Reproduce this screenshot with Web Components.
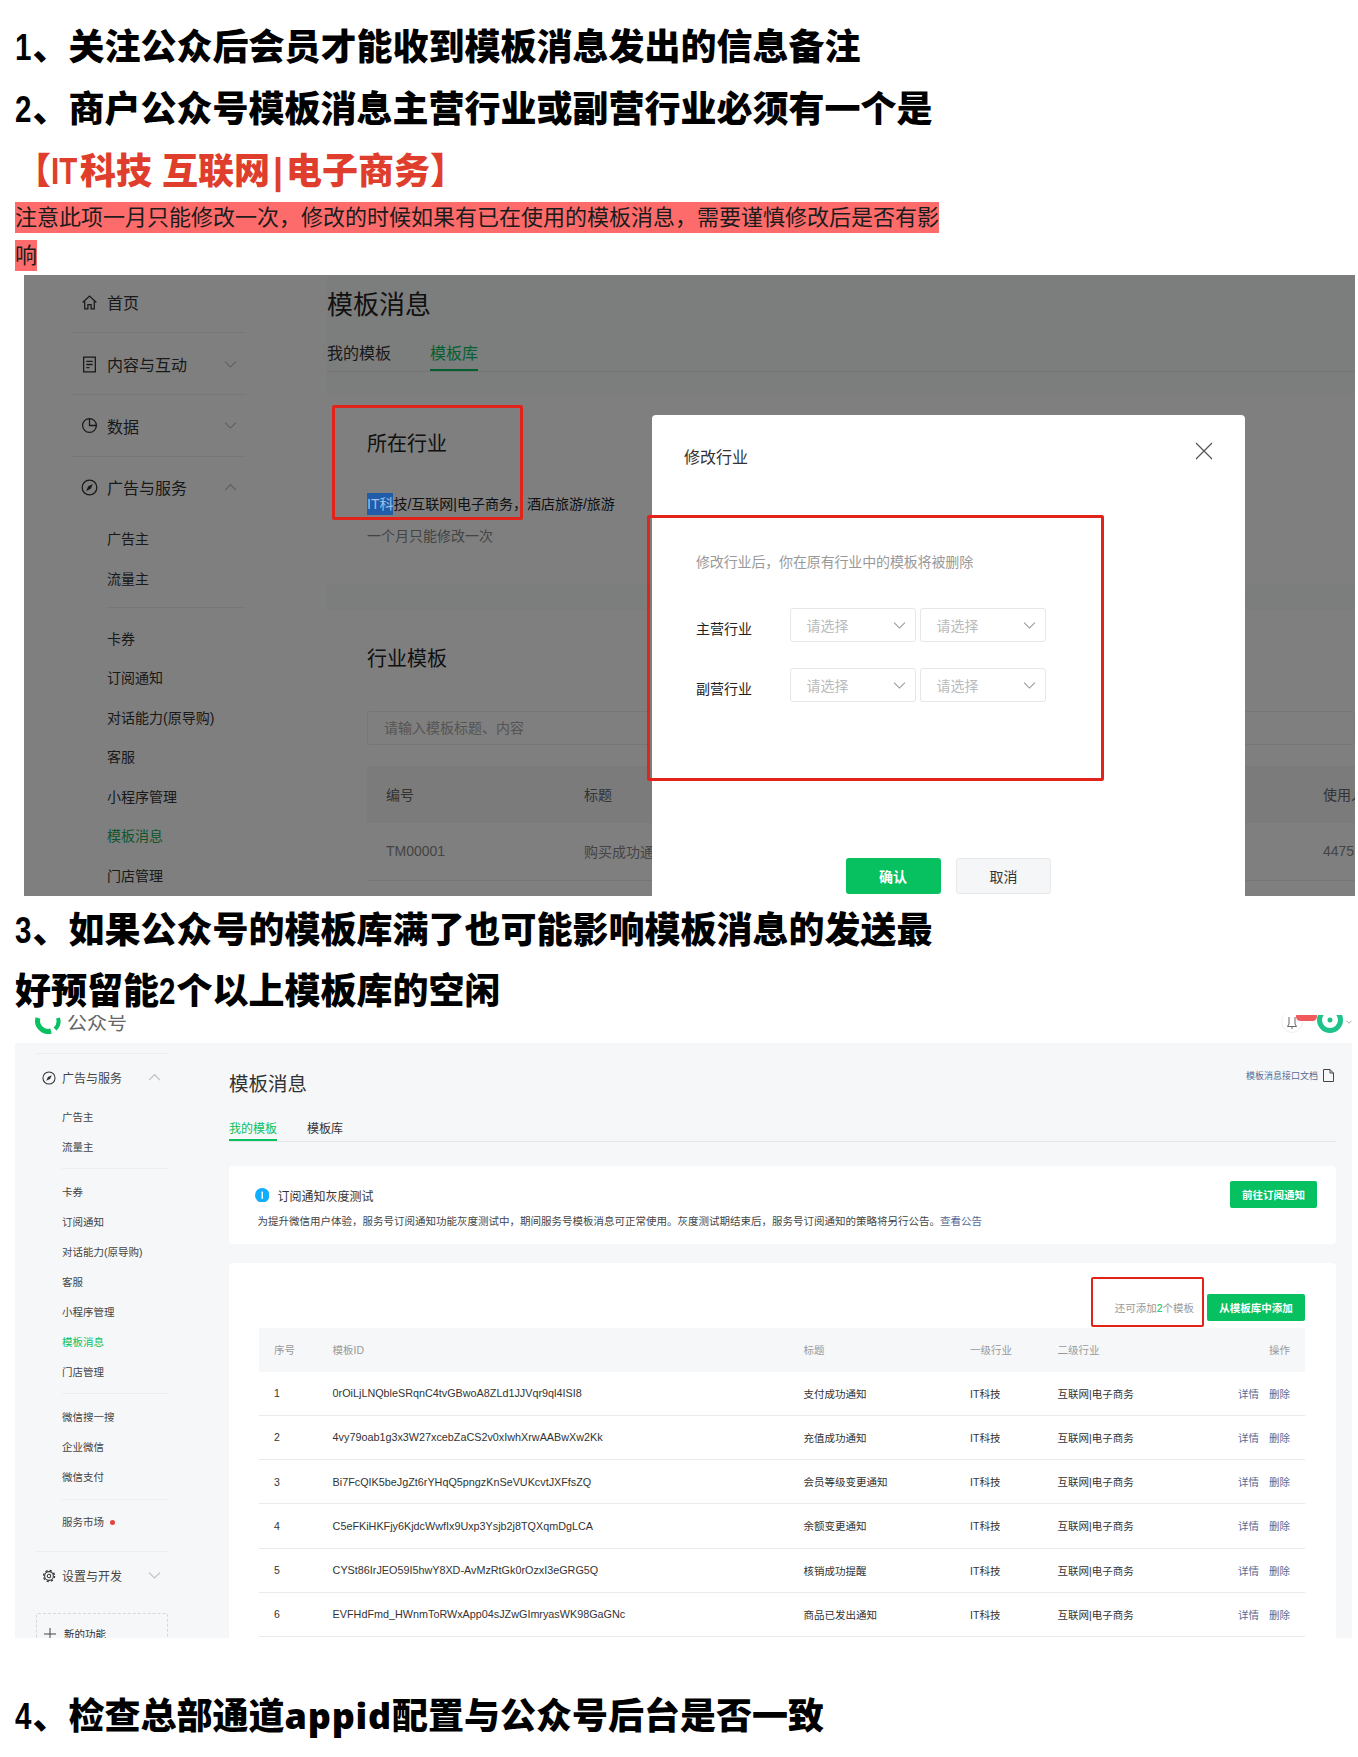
<!DOCTYPE html>
<html lang="zh">
<head>
<meta charset="utf-8">
<title>模板消息</title>
<style>
	html, body { margin: 0; padding: 0; background: #fff; }
	body {
		font-family: "Liberation Sans", "Noto Sans CJK SC", sans-serif;
		padding: 17px 0 10px 15px;
		overflow-x: hidden;
	}
	/* digits and capitals in the headings are condensed in the original */
	.nw { display: inline-block; transform: scaleX(.82); transform-origin: left; margin-right: -2.600px; }
	.nw.it { margin-right: -3px; }
	.bar { margin: 0 3px; }
	.wd { font-family: "Noto Sans", "Liberation Sans", sans-serif; letter-spacing: .8px; }
</style>
</head>
<body>
<doc-heading><span class="nw">1</span>、关注公众后会员才能收到模板消息发出的信息备注</doc-heading>
<doc-heading><span class="nw">2</span>、商户公众号模板消息主营行业或副营行业必须有一个是</doc-heading>
<doc-heading style="color:#e03e2d">【<span class="nw it">IT</span>科技 互联网<span class="bar">|</span>电子商务】</doc-heading>
<note-bar>注意此项一月只能修改一次，修改的时候如果有已在使用的模板消息，需要谨慎修改后是否有影响</note-bar>
<shot-industry></shot-industry>
<doc-heading style="margin-top:4px;line-height:61px"><span class="nw">3</span>、如果公众号的模板库满了也可能影响模板消息的发送最<br>好预留能<span class="nw">2</span>个以上模板库的空闲</doc-heading>
<shot-templates></shot-templates>
<doc-heading style="margin-top:47px"><span class="nw">4</span>、检查总部通道<span class="wd">appid</span>配置与公众号后台是否一致</doc-heading>

<script>
const ICONS = {
	home: '<path d="M1.5 8 8 2l6.5 6M3.5 7v7h3v-4h3v4h3V7" fill="none" stroke="#333" stroke-width="1.2"/>',
	doc: '<path d="M2.5 1h11v14h-11zM5 5h6M5 8h6M5 11h3" fill="none" stroke="#333" stroke-width="1.2"/>',
	pie: '<path d="M8 1.5a6.5 6.5 0 1 0 6.5 6.5H8z" fill="none" stroke="#333" stroke-width="1.2"/><path d="M8 1.5A6.5 6.5 0 0 1 14.500 8" fill="none" stroke="#333" stroke-width="1.2"/>',
	compass: '<circle cx="8" cy="8" r="6.9" fill="none" stroke="#333" stroke-width="1.2"/><path d="M11.200 4.800 9.200 9.200 4.800 11.200 6.800 6.800z" fill="#333"/>',
	gear: '<circle cx="8" cy="8" r="5" fill="none" stroke="#333" stroke-width="1.200"/><circle cx="8" cy="8" r="6.300" fill="none" stroke="#333" stroke-width="1.500" stroke-dasharray="2.500 2.450"/><circle cx="8" cy="8" r="2" fill="none" stroke="#333" stroke-width="1.200"/>'
};

function chevron(up, w, color) {
	const d = up ? 'M1 6.500 6 1.500l5 5' : 'M1 1.500l5 5 5-5';
	return `<svg width="${w}" height="${w * 8 / 12}" viewBox="0 0 12 8"><path d="${d}" fill="none" stroke="${color}" stroke-width="1"/></svg>`;
}

class DocHeading extends HTMLElement {
	constructor() {
		super();
		this.attachShadow({ mode: 'open' });
		this.shadowRoot.innerHTML = `
		<style>
			:host {
				display: block;
				font-size: 36px;
				font-weight: 900;
				line-height: 62px;
				color: #000;
				white-space: nowrap;
			}
		</style>
		<slot></slot>`;
	}
}
customElements.define('doc-heading', DocHeading);

class NoteBar extends HTMLElement {
	constructor() {
		super();
		this.attachShadow({ mode: 'open' });
		this.shadowRoot.innerHTML = `
		<style>
			:host {
				display: block;
				width: 930px;
				margin-top: -4px;
				font-size: 22px;
				line-height: 37.500px;
				color: #1c1c1c;
			}
			span { background: #fd6b6b; padding: 3px 0; }
		</style>
		<span><slot></slot></span>`;
	}
}
customElements.define('note-bar', NoteBar);

class RedBox extends HTMLElement {
	constructor() {
		super();
		this.attachShadow({ mode: 'open' });
		this.shadowRoot.innerHTML = `
		<style>
			:host {
				display: block;
				position: absolute;
				z-index: 3;
				box-sizing: border-box;
				border: var(--red-w, 3px) solid #e2231a;
				border-radius: 2px;
				pointer-events: none;
			}
		</style>`;
	}
}
customElements.define('red-box', RedBox);

// one row of a sidebar, sizes come from custom properties on the side-nav
class NavItem extends HTMLElement {
	constructor() {
		super();
		this.attachShadow({ mode: 'open' });
	}
	connectedCallback() {
		const icon = this.getAttribute('icon');
		const chev = this.getAttribute('chev');
		const group = this.hasAttribute('group');
		const active = this.hasAttribute('active');
		this.shadowRoot.innerHTML = `
		<style>
			:host {
				display: flex;
				align-items: center;
				height: ${group ? 'var(--nav-row)' : 'var(--nav-sub-row)'};
				font-size: ${group ? 'var(--nav-font)' : 'var(--nav-sub-font)'};
				color: ${active ? 'var(--nav-green)' : 'var(--nav-color, #333)'};
				position: relative;
			}
			svg.i {
				position: absolute;
				left: var(--nav-icon-left);
				width: var(--nav-icon);
				height: var(--nav-icon);
			}
			.t { margin-left: var(--nav-text-x); white-space: nowrap; }
			.c { position: absolute; right: var(--nav-chev-right); display: flex; }
		</style>
		${icon ? `<svg class="i" viewBox="0 0 16 16">${ICONS[icon]}</svg>` : ''}
		<span class="t"><slot></slot></span>
		${chev ? `<span class="c">${chevron(chev == 'up', 13, '#bbb')}</span>` : ''}`;
	}
}
customElements.define('nav-item', NavItem);

class NavRule extends HTMLElement {
	constructor() {
		super();
		this.attachShadow({ mode: 'open' });
	}
	connectedCallback() {
		const h = this.getAttribute('h') || 'var(--nav-gap)';
		const full = this.hasAttribute('full');
		const end = this.hasAttribute('end');
		this.shadowRoot.innerHTML = `
		<style>
			:host {
				display: flex;
				align-items: ${end ? 'flex-end' : 'center'};
				height: ${h};
				padding-left: ${full ? '0' : 'var(--nav-text-x)'};
			}
			i { display: block; flex: 1; height: 1px; background: #eceef0; }
		</style>
		<i></i>`;
	}
}
customElements.define('nav-rule', NavRule);

class SideNav extends HTMLElement {
	constructor() {
		super();
		this.attachShadow({ mode: 'open' });
		this.shadowRoot.innerHTML = `
		<style>
			:host { display: block; flex: none; --nav-green: #07c160; }
		</style>
		<slot></slot>`;
	}
}
customElements.define('side-nav', SideNav);

class SelectBox extends HTMLElement {
	constructor() {
		super();
		this.attachShadow({ mode: 'open' });
		this.shadowRoot.innerHTML = `
		<style>
			:host {
				display: flex;
				align-items: center;
				justify-content: space-between;
				box-sizing: border-box;
				width: 126px;
				height: 34px;
				padding: 0 9px 0 16px;
				border: 1px solid #e6e6e6;
				border-radius: 3px;
				font-size: 14px;
				color: #bbb;
			}
			svg { display: block; }
		</style>
		<span>请选择</span>${chevron(false, 13, '#999')}`;
	}
}
customElements.define('select-box', SelectBox);

class IndustryModal extends HTMLElement {
	constructor() {
		super();
		this.attachShadow({ mode: 'open' });
		this.shadowRoot.innerHTML = `
		<style>
			:host {
				display: block;
				position: absolute;
				z-index: 2;
				left: 628px;
				top: 140px;
				width: 592.500px;
				height: 520px;
				box-sizing: border-box;
				padding: 31px 0 0 32px;
				background: #fff;
				border-radius: 4px;
				color: #333;
			}
			h3 { margin: 0; font: inherit; font-size: 16px; line-height: 24px; font-weight: 400; color: #333; }
			.x { position: absolute; left: 543px; top: 27px; }
			.body { padding-left: 12px; }
			.tip { margin-top: 81px; font-size: 14px; line-height: 22px; letter-spacing: -.15px; color: #999; }
			.row { display: flex; gap: 4px; align-items: center; margin-top: 26px; }
			.row.first { margin-top: 35px; }
			.row label { width: 93.500px; margin-right: -4px; font-size: 14px; color: #222; position: relative; top: 3px; }
			.btns { display: flex; gap: 15.500px; margin: 156px 0 0 161.500px; }
			.btn {
				display: flex;
				align-items: center;
				justify-content: center;
				box-sizing: border-box;
				width: 95px;
				height: 36px;
				border-radius: 3px;
				font-size: 14px;
			}
			.ok { background: #07c160; color: #fff; font-weight: 700; }
			.no { background: #f5f6f7; border: 1px solid #e8e8e8; color: #333; }
		</style>
		<h3>修改行业</h3>
		<svg class="x" width="18" height="18" viewBox="0 0 18 18"><path d="M1 1l16 16M17 1 1 17" stroke="#555" stroke-width="1.200" fill="none"/></svg>
		<div class="body">
			<div class="tip">修改行业后，你在原有行业中的模板将被删除</div>
			<div class="row first"><label>主营行业</label><select-box></select-box><select-box></select-box></div>
			<div class="row"><label>副营行业</label><select-box></select-box><select-box></select-box></div>
		</div>
		<div class="btns"><div class="btn ok">确认</div><div class="btn no">取消</div></div>`;
	}
}
customElements.define('industry-modal', IndustryModal);

class ShotIndustry extends HTMLElement {
	constructor() {
		super();
		this.attachShadow({ mode: 'open' });
		this.shadowRoot.innerHTML = `
		<style>
			:host {
				display: flex;
				position: relative;
				box-sizing: border-box;
				width: 1331px;
				height: 621px;
				margin: 1px 0 0 9px;
				overflow: hidden;
				background: #f9fafb;
				color: #333;
			}
			.side { width: 303px; flex: none; background: #fff; box-sizing: border-box; padding-left: 48px; }
			side-nav {
				width: 174px;
				margin-top: -3.500px;
				--nav-row: 61.700px;
				--nav-sub-row: 39.500px;
				--nav-font: 16px;
				--nav-sub-font: 14px;
				--nav-icon: 17px;
				--nav-icon-left: 8.500px;
				--nav-text-x: 35px;
				--nav-chev-right: 9px;
				--nav-gap: 20.600px;
				--nav-green: #1aad5b;
			}
			nav-item.rule { box-shadow: inset 0 -1px 0 #eceef0; }
			.main { flex: none; width: 1028px; }
			h1 { margin: 0; padding-top: 12px; font: inherit; font-size: 26px; line-height: 36px; font-weight: 400; color: #222; }
			.tabs { display: flex; gap: 39px; margin-top: 20px; border-bottom: 1px solid #e7e7e7; font-size: 16px; line-height: 22px; }
			.tabs span { padding-bottom: 4px; border-bottom: 2px solid transparent; }
			.tabs .on { color: #07c160; border-color: #07c160; }
			.card { background: #fff; border-radius: 4px; padding-left: 40px; }
			.c1 { margin-top: 22.500px; height: 190.500px; padding-top: 35px; box-sizing: border-box; }
			.c2 { margin-top: 24.600px; height: 300px; padding-top: 35.400px; box-sizing: border-box; }
			h2 { margin: 0; font: inherit; font-size: 20px; line-height: 28px; font-weight: 400; color: #222; }
			.val { margin-top: 35.500px; font-size: 14px; line-height: 22px; color: #222; white-space: nowrap; }
			.sel { position: relative; z-index: 2; display: inline-block; background: #205ca8; color: #9fc0e8; }
			.hint { margin-top: 9.500px; font-size: 14px; line-height: 22px; color: #888; }
			.search {
				margin-top: 38px; height: 34.500px; box-sizing: border-box; padding-left: 16px;
				border: 1px solid #eee; border-radius: 3px; font-size: 14px; line-height: 32px; color: #aaa;
			}
			.thead, .trow { display: grid; grid-template-columns: 198px 739px 1fr; padding-left: 19px; align-items: center; font-size: 14px; white-space: nowrap; }
			.thead { margin-top: 20.500px; height: 57px; background: #f6f7f9; color: #666; }
			.trow { height: 58px; box-sizing: border-box; border-bottom: 1px solid #eee; color: #888; }
			.overlay { position: absolute; inset: 0; z-index: 1; background: rgba(0, 0, 0, .5); }
		</style>
		<div class="side">
			<side-nav>
				<nav-item group icon="home" class="rule">首页</nav-item>
				<nav-item group icon="doc" chev="down" class="rule">内容与互动</nav-item>
				<nav-item group icon="pie" chev="down" class="rule">数据</nav-item>
				<nav-item group icon="compass" chev="up">广告与服务</nav-item>
				<nav-item>广告主</nav-item>
				<nav-item>流量主</nav-item>
				<nav-rule></nav-rule>
				<nav-item>卡券</nav-item>
				<nav-item>订阅通知</nav-item>
				<nav-item>对话能力(原导购)</nav-item>
				<nav-item>客服</nav-item>
				<nav-item>小程序管理</nav-item>
				<nav-item active>模板消息</nav-item>
				<nav-item>门店管理</nav-item>
			</side-nav>
		</div>
		<div class="main">
			<h1>模板消息</h1>
			<div class="tabs"><span>我的模板</span><span class="on">模板库</span></div>
			<div class="card c1">
				<h2>所在行业</h2>
				<div class="val"><span class="sel">IT科</span>技/互联网|电子商务，酒店旅游/旅游</div>
				<div class="hint">一个月只能修改一次</div>
			</div>
			<div class="card c2">
				<h2>行业模板</h2>
				<div class="search">请输入模板标题、内容</div>
				<div class="thead"><span>编号</span><span>标题</span><span>使用人数</span></div>
				<div class="trow"><span>TM00001</span><span>购买成功通知</span><span>44751</span></div>
			</div>
		</div>
		<div class="overlay"></div>
		<industry-modal></industry-modal>
		<red-box style="left:308px;top:130px;width:191px;height:115px"></red-box>
		<red-box style="left:623px;top:240px;width:457px;height:266px"></red-box>`;
	}
}
customElements.define('shot-industry', ShotIndustry);

class TmplRow extends HTMLElement {
	constructor() {
		super();
		this.attachShadow({ mode: 'open' });
	}
	connectedCallback() {
		this.shadowRoot.innerHTML = `
		<style>
			:host {
				display: grid;
				grid-template-columns: 58.600px 471px 166.500px 87.500px 1fr auto;
				align-items: center;
				box-sizing: border-box;
				height: 44.250px;
				padding: 0 15px;
				border-bottom: 1px solid #e9ebee;
				font-size: 10.500px;
				color: #333;
				white-space: nowrap;
			}
			.id { font-size: 10.800px; }
			.ops { display: flex; gap: 10px; color: #576b95; }
		</style>
		<span>${this.getAttribute('n')}</span>
		<span class="id">${this.getAttribute('tid')}</span>
		<span>${this.getAttribute('title')}</span>
		<span>IT科技</span>
		<span>互联网|电子商务</span>
		<span class="ops"><span>详情</span><span>删除</span></span>`;
	}
}
customElements.define('tmpl-row', TmplRow);

class ShotTemplates extends HTMLElement {
	constructor() {
		super();
		this.attachShadow({ mode: 'open' });
		this.shadowRoot.innerHTML = `
		<style>
			:host {
				display: block;
				position: relative;
				box-sizing: border-box;
				width: 1337px;
				height: 623px;
				margin-top: -7px;
				overflow: hidden;
				background: #f6f7f9;
				color: #333;
			}
			header {
				display: flex;
				align-items: flex-end;
				height: 28px;
				background: #fff;
				position: relative;
				overflow: hidden;
			}
			.logo { position: absolute; left: 20px; top: -7px; }
			.brand { position: absolute; left: 52px; top: -5px; font-size: 20px; line-height: 26px; color: #666; }
			.tools { display: flex; align-items: flex-end; margin-left: auto; }
			.bell {
				position: relative; width: 22px; height: 22px; box-sizing: border-box;
				border: 1px solid #f0f0f0; border-radius: 50%; margin: 0 14px 10px 0;
			}
			.bell svg { position: absolute; left: 4px; top: 5px; }
			.pill { position: absolute; left: 14px; top: 0; width: 21px; height: 9px; border-radius: 5px; background: #f05a5a; }
			.ava { display: block; margin: 0 3px 10px 0; }
			.tools .chev { margin: 0 0 19px 0; display: flex; }

			.body { display: flex; }
			side-nav {
				width: 132px;
				margin-left: 21px;
				--nav-row: 47px;
				--nav-sub-row: 30px;
				--nav-font: 12px;
				--nav-sub-font: 10.500px;
				--nav-icon: 14px;
				--nav-icon-left: 6px;
				--nav-text-x: 26px;
				--nav-chev-right: 7px;
				--nav-gap: 15.300px;
				--nav-color: #444;
			}
			.dot { display: inline-block; width: 5px; height: 5px; margin-left: 6px; border-radius: 50%; background: #e64340; vertical-align: 1px; }
			.new {
				position: relative; height: 30px; margin-top: 14px; box-sizing: border-box;
				border: 1px dashed #d8d8d8; border-radius: 2px; font-size: 10.500px; color: #333;
			}
			.new svg { position: absolute; left: 7px; top: 14px; }
			.new span { position: absolute; left: 27px; top: 12px; white-space: nowrap; }

			.main { width: 1107px; margin-left: 61px; flex: none; }
			.top { display: flex; justify-content: space-between; padding-top: 27px; }
			h1 { margin: 0; font: inherit; font-size: 19.500px; line-height: 28px; font-weight: 400; color: #333; }
			.doc { display: flex; align-items: center; gap: 5px; height: 14px; margin: -2px 2px 0 0; font-size: 9px; color: #576b95; white-space: nowrap; }
			.tabs { display: flex; gap: 30px; margin-top: 23px; border-bottom: 1px solid #e3e5e8; font-size: 12px; line-height: 16px; }
			.tabs span { padding-bottom: 2px; border-bottom: 2px solid transparent; }
			.tabs .on { color: #07c160; border-color: #07c160; }
			.notice {
				display: flex; justify-content: space-between; align-items: flex-start;
				height: 78px; margin-top: 24px; padding: 0 19px 0 25.500px; box-sizing: border-box;
				background: #fff; border-radius: 4px;
			}
			.nt { display: flex; align-items: center; gap: 8.500px; margin-top: 21px; height: 16px; font-size: 12px; color: #333; }
			.nd { margin: 11px 0 0 3px; font-size: 10.500px; line-height: 14px; color: #444; white-space: nowrap; }
			.nd a { color: #576b95; }
			.btn {
				display: flex; align-items: center; justify-content: center; flex: none; height: 27px;
				background: #07c160; color: #fff; border-radius: 2px; font-size: 10.500px; font-weight: 700;
			}
			.notice .btn { width: 87px; margin-top: 15px; }
			.list { margin-top: 19px; height: 400px; padding: 31px 31px 0 30px; box-sizing: border-box; background: #fff; border-radius: 4px; }
			.bar { display: flex; justify-content: flex-end; align-items: center; gap: 13px; height: 27px; font-size: 10.500px; color: #999; }
			.bar b { font-weight: 400; color: #07c160; }
			.bar .btn { width: 98px; }
			.head {
				display: grid; grid-template-columns: 58.600px 471px 166.500px 87.500px 1fr auto; align-items: center;
				height: 43.500px; margin-top: 7px; padding: 0 15px; background: #f6f7f9; font-size: 10.500px; color: #999;
			}
		</style>
		<header>
			<svg class="logo" width="26" height="26" viewBox="0 0 26 26">
				<path d="M3 10a10.500 10.500 0 0 0 13 13" fill="none" stroke="#07c160" stroke-width="5"/>
				<path d="M20 21a10.500 10.500 0 0 0 3-11" fill="none" stroke="#07c160" stroke-width="4"/>
			</svg>
			<span class="brand">公众号</span>
			<div class="tools">
				<div class="bell">
					<svg width="12" height="12" viewBox="0 0 12 12"><path d="M3 0v7l-1.500 2.500h9L9 7V0M5 11h2" fill="none" stroke="#555" stroke-width=".9"/></svg>
					<span class="pill"></span>
				</div>
				<svg class="ava" width="26" height="26" viewBox="0 0 26 26"><circle cx="13" cy="13" r="10.500" fill="none" stroke="#1ec28b" stroke-width="5"/><circle cx="13" cy="13" r="2.500" fill="#1ec28b"/></svg>
				<span class="chev">${chevron(false, 6, '#555')}</span>
			</div>
		</header>
		<div class="body">
			<side-nav>
				<nav-rule full end h="11px"></nav-rule>
				<nav-item group icon="compass" chev="up">广告与服务</nav-item>
				<nav-item>广告主</nav-item>
				<nav-item>流量主</nav-item>
				<nav-rule></nav-rule>
				<nav-item>卡券</nav-item>
				<nav-item>订阅通知</nav-item>
				<nav-item>对话能力(原导购)</nav-item>
				<nav-item>客服</nav-item>
				<nav-item>小程序管理</nav-item>
				<nav-item active>模板消息</nav-item>
				<nav-item>门店管理</nav-item>
				<nav-rule></nav-rule>
				<nav-item>微信搜一搜</nav-item>
				<nav-item>企业微信</nav-item>
				<nav-item>微信支付</nav-item>
				<nav-rule></nav-rule>
				<nav-item>服务市场<span class="dot"></span></nav-item>
				<nav-rule full end></nav-rule>
				<nav-item group icon="gear" chev="down">设置与开发</nav-item>
				<div class="new">
					<svg width="12" height="12" viewBox="0 0 12 12"><path d="M6 0v12M0 6h12" stroke="#444" stroke-width="1"/></svg>
					<span>新的功能</span>
				</div>
			</side-nav>
			<div class="main">
				<div class="top">
					<h1>模板消息</h1>
					<div class="doc">模板消息接口文档
						<svg width="11" height="13" viewBox="0 0 11 13"><path d="M.5.500h6.500l3.500 3.500v8.500h-10zM7 .500V4h3.500" fill="none" stroke="#444" stroke-width="1"/></svg>
					</div>
				</div>
				<div class="tabs"><span class="on">我的模板</span><span>模板库</span></div>
				<div class="notice">
					<div>
						<div class="nt">
							<svg width="14.500" height="14.500" viewBox="0 0 14 14"><circle cx="7" cy="7" r="7" fill="#10aeff"/><rect x="6.300" y="3.500" width="1.400" height="7" fill="#fff"/></svg>
							<span>订阅通知灰度测试</span>
						</div>
						<div class="nd">为提升微信用户体验，服务号订阅通知功能灰度测试中，期间服务号模板消息可正常使用。灰度测试期结束后，服务号订阅通知的策略将另行公告。<a>查看公告</a></div>
					</div>
					<div class="btn">前往订阅通知</div>
				</div>
				<div class="list">
					<div class="bar"><span>还可添加<b>2</b>个模板</span><div class="btn">从模板库中添加</div></div>
					<div class="head"><span>序号</span><span>模板ID</span><span>标题</span><span>一级行业</span><span>二级行业</span><span>操作</span></div>
					<tmpl-row n="1" tid="0rOiLjLNQbleSRqnC4tvGBwoA8ZLd1JJVqr9ql4ISI8" title="支付成功通知"></tmpl-row>
					<tmpl-row n="2" tid="4vy79oab1g3x3W27xcebZaCS2v0xIwhXrwAABwXw2Kk" title="充值成功通知"></tmpl-row>
					<tmpl-row n="3" tid="Bi7FcQIK5beJgZt6rYHqQ5pngzKnSeVUKcvtJXFfsZQ" title="会员等级变更通知"></tmpl-row>
					<tmpl-row n="4" tid="C5eFKiHKFjy6KjdcWwfIx9Uxp3Ysjb2j8TQXqmDgLCA" title="余额变更通知"></tmpl-row>
					<tmpl-row n="5" tid="CYSt86IrJEO59I5hwY8XD-AvMzRtGk0rOzxI3eGRG5Q" title="核销成功提醒"></tmpl-row>
					<tmpl-row n="6" tid="EVFHdFmd_HWnmToRWxApp04sJZwGImryasWK98GaGNc" title="商品已发出通知"></tmpl-row>
				</div>
			</div>
		</div>
		<red-box style="left:1076px;top:262px;width:113px;height:50px;--red-w:2px"></red-box>`;
	}
}
customElements.define('shot-templates', ShotTemplates);
</script>
</body>
</html>
